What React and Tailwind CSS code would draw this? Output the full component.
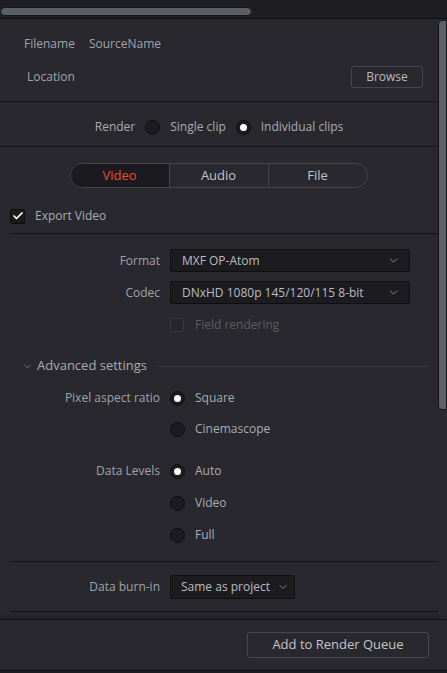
import React from "react";
import { ChevronDown, Check } from "lucide-react";

const font = { fontFamily: '"Open Sans", "Noto Sans", sans-serif' };

function Radio({ on }) {
  return (
    <div className="w-[15px] h-[15px] rounded-full bg-[#1c1c20] border border-[#0e0e10] flex items-center justify-center shrink-0">
      {on && <div className="w-[7px] h-[7px] rounded-full bg-white" />}
    </div>
  );
}

function Row({ label, children, className = "" }) {
  return (
    <div className={"flex items-center " + className}>
      <div className="w-[160px] text-right text-[12px] text-[#a0a4aa]">{label}</div>
      <div className="ml-[10px] flex items-center flex-1">{children}</div>
    </div>
  );
}

function Select({ value, className = "" }) {
  return (
    <div className={"h-[23px] flex items-center justify-between bg-[#1c1c20] border border-[#0f0f11] rounded-[2px] pl-[11px] pr-[9px] text-[12px] text-[#b9bcc1] " + className}>
      <span>{value}</span>
      <ChevronDown size={13} strokeWidth={1.5} className="text-[#a0a3a8]" />
    </div>
  );
}

function RadioOpt({ on, label }) {
  return (
    <div className="flex items-center gap-[10px]">
      <Radio on={on} />
      <span className="text-[12px] text-[#a9adb2]">{label}</span>
    </div>
  );
}

export default function App() {
  return (
    <div style={font} className="w-[447px] h-[673px] bg-[#1d1d21] flex flex-col overflow-hidden select-none">
      {/* top strip with horizontal scrollbar */}
      <div className="h-[19px] bg-[#1f1f23] border-b border-[#0d0d0f] flex items-start pt-[7px] shrink-0">
        <div className="w-[252px] h-[9px] rounded-full bg-[#5a5f67] border border-[#141416]" />
      </div>

      {/* main scroll area */}
      <div className="flex h-[600px] bg-[#28282e] shrink-0">
        <div className="flex-1 flex flex-col">
          {/* file section */}
          <div className="border-b border-[#151517] pt-[14px] pb-[13px] text-[12px]">
            <div className="h-[22px] flex items-center pl-[24px] text-[#a0a4aa]">
              <span>Filename</span>
              <span className="ml-[14px]">SourceName</span>
            </div>
            <div className="h-[22px] mt-[11px] flex items-center justify-between pl-[27px] pr-[15px] text-[#a0a4aa]">
              <span>Location</span>
              <div className="w-[72px] h-[22px] rounded-[3px] border border-[#46474c] flex items-center justify-center text-[#b9bcc1]">Browse</div>
            </div>
          </div>

          {/* render section */}
          <div className="border-b border-[#151517] pt-[15px] pb-[9px]">
            <div className="h-[20px] flex items-center justify-center gap-[10px] text-[12px] text-[#a9adb2]">
              <span>Render</span>
              <Radio />
              <span>Single clip</span>
              <Radio on />
              <span>Individual clips</span>
            </div>
          </div>

          {/* settings */}
          <div className="flex flex-col flex-1 pt-[16px]">
            <div className="flex justify-center pr-[1px]">
              <div className="h-[25px] w-[298px] rounded-full border border-[#44454a] flex overflow-hidden text-[13px]">
                <div className="flex-1 bg-[#1b1b1f] flex items-center justify-center text-[#ea4a36] border-r border-[#44454a]">Video</div>
                <div className="flex-1 flex items-center justify-center text-[#c4c6ca] border-r border-[#44454a]">Audio</div>
                <div className="flex-1 flex items-center justify-center text-[#c4c6ca]">File</div>
              </div>
            </div>

            <div className="mt-[20px] h-[16px] flex items-center pl-[10px] gap-[10px]">
              <div className="w-[15px] h-[15px] rounded-[2px] bg-[#1a1a1d] border border-[#0e0e10] flex items-center justify-center">
                <Check size={12} strokeWidth={3.5} className="text-white" />
              </div>
              <span className="text-[12px] text-[#a9adb2]">Export Video</span>
            </div>

            <div className="mt-[9px] ml-[10px] h-px bg-[#131315]" />

            <Row label="Format" className="mt-[15px] h-[23px]">
              <Select value="MXF OP-Atom" className="w-[240px]" />
            </Row>
            <Row label="Codec" className="mt-[9px] h-[23px]">
              <Select value="DNxHD 1080p 145/120/115 8-bit" className="w-[240px]" />
            </Row>
            <Row label="" className="mt-[13px] h-[15px]">
              <div className="flex items-center gap-[11px]">
                <div className="w-[14px] h-[14px] rounded-[2px] border border-[#38393e] bg-[#26262b]" />
                <span className="text-[12px] text-[#5b5d62]">Field rendering</span>
              </div>
            </Row>

            <div className="mt-[24px] h-[20px] flex items-center pl-[22px] pr-[11px]">
              <ChevronDown size={11} strokeWidth={1.5} className="text-[#8e9196]" />
              <span className="ml-[4px] text-[13px] text-[#a9adb2]">Advanced settings</span>
              <div className="ml-[11px] flex-1 h-px bg-[#3b3c41]" />
            </div>

            <Row label="Pixel aspect ratio" className="mt-[12px] h-[20px]">
              <RadioOpt on label="Square" />
            </Row>
            <Row label="" className="mt-[11px] h-[20px]">
              <RadioOpt label="Cinemascope" />
            </Row>
            <Row label="Data Levels" className="mt-[22px] h-[20px]">
              <RadioOpt on label="Auto" />
            </Row>
            <Row label="" className="mt-[12px] h-[20px]">
              <RadioOpt label="Video" />
            </Row>
            <Row label="" className="mt-[12px] h-[20px]">
              <RadioOpt label="Full" />
            </Row>

            <div className="mt-[16px] ml-[10px] h-px bg-[#131315]" />

            <Row label="Data burn-in" className="mt-[13px] h-[24px]">
              <div className="h-[24px] w-[125px] flex items-center gap-[7px] bg-[#1c1c20] border border-[#0f0f11] rounded-[2px] pl-[10px] text-[12px] text-[#b9bcc1]">
                <span>Same as project</span>
                <ChevronDown size={12} strokeWidth={1.5} className="text-[#a0a3a8]" />
              </div>
            </Row>

            <div className="mt-[12px] ml-[10px] h-px bg-[#131315]" />
            <div className="flex-1 bg-gradient-to-b from-[#28282e] to-[#222226]" />
          </div>
        </div>
        {/* vertical scrollbar */}
        <div className="w-[9px] pt-[1px] flex flex-col">
          <div className="h-[390px] w-[9px] rounded-l-[4px] bg-[#5c6169] border border-[#141416]" />
        </div>
      </div>

      {/* footer */}
      <div className="border-t border-b border-[#111113] bg-[#28282e] h-[52px] flex items-start justify-end pr-[18px] pt-[12px] shrink-0">
        <div className="w-[182px] h-[26px] rounded-[3px] border border-[#46474c] flex items-center justify-center text-[13px] text-[#c4c6ca]">Add to Render Queue</div>
      </div>
    </div>
  );
}
